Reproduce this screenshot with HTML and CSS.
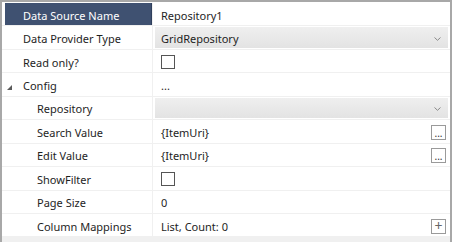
FILE: index.html
```html
<!DOCTYPE html>
<html lang="en">

<head>
    <meta charset="UTF-8">
    <title>Property Grid</title>
    <link rel="stylesheet" href="styles.css">
</head>

<body>
    <div class="grid">
        <div class="row selected">
            <div class="name">Data Source Name</div>
            <div class="value">Repository1</div>
        </div>
        <div class="row">
            <div class="name">Data Provider Type</div>
            <div class="value">
                <div class="combo">
                    <span>GridRepository</span>
                    <svg class="chevron" width="7" height="4" viewBox="0 0 7 4"><path d="M0.5 0.5 L3.5 3.3 L6.5 0.5" fill="none" stroke="#8a8a8a" stroke-width="1"/></svg>
                </div>
            </div>
        </div>
        <div class="row">
            <div class="name">Read only?</div>
            <div class="value"><span class="check"></span></div>
        </div>
        <div class="row">
            <div class="name">
                <svg class="expander" width="5" height="5" viewBox="0 0 5 5"><path d="M5 0 L5 5 L0 5 Z" fill="#5a5a5a"/></svg>
                Config
            </div>
            <div class="value">...</div>
        </div>
        <div class="row">
            <div class="name child">Repository</div>
            <div class="value">
                <div class="combo">
                    <span></span>
                    <svg class="chevron" width="7" height="4" viewBox="0 0 7 4"><path d="M0.5 0.5 L3.5 3.3 L6.5 0.5" fill="none" stroke="#8a8a8a" stroke-width="1"/></svg>
                </div>
            </div>
        </div>
        <div class="row">
            <div class="name child">Search Value</div>
            <div class="value with-btn"><span>{ItemUri}</span><span class="btn">...</span></div>
        </div>
        <div class="row">
            <div class="name child">Edit Value</div>
            <div class="value with-btn"><span>{ItemUri}</span><span class="btn">...</span></div>
        </div>
        <div class="row">
            <div class="name child">ShowFilter</div>
            <div class="value"><span class="check"></span></div>
        </div>
        <div class="row">
            <div class="name child">Page Size</div>
            <div class="value">0</div>
        </div>
        <div class="row">
            <div class="name child">Column Mappings</div>
            <div class="value with-btn"><span>List, Count: 0</span><span class="btn plus">+</span></div>
        </div>
        <div class="footer"></div>
    </div>
</body>

</html>
```

FILE: styles.css
```css
body {
    margin: 0;
    font-family: "Noto Sans", sans-serif;
    font-size: 11px;
    color: #1e1e1e;
    background: #ffffff;
}

.grid {
    width: 448px;
    height: 240px;
    border: 2px solid #a8a8a8;
    border-bottom: none;
    padding-top: 1px;
    display: flex;
    flex-direction: column;
}

.row {
    display: grid;
    grid-template-columns: 150px 1fr;
    height: 22.45px;
    flex-shrink: 0;
    border-bottom: 1px solid #f0f0f0;
}

.name {
    display: flex;
    align-items: center;
    margin-left: 3px;
    padding-left: 18px;
    padding-top: 2px;
    position: relative;
}

.name.child {
    padding-left: 32px;
}

.selected .name {
    background-color: #3f5171;
    color: white;
    border-right: 1px solid #2f3f5c;
}

.expander {
    position: absolute;
    left: 2px;
    top: 12px;
}

.value {
    display: flex;
    align-items: center;
    padding-left: 8px;
    padding-top: 2px;
    border-left: 1px solid #f0f0f0;
}

.combo {
    flex: 1;
    align-self: stretch;
    margin: -1px 2px 1px -6px;
    padding-left: 6px;
    padding-top: 2px;
    padding-right: 7px;
    display: flex;
    align-items: center;
    justify-content: space-between;
    background: linear-gradient(#efefef, #e3e3e3);
}

.check {
    width: 12px;
    height: 12px;
    border: 1px solid #555555;
    background: white;
}

.with-btn {
    justify-content: space-between;
    padding-right: 4px;
}

.btn {
    width: 13px;
    height: 13px;
    border: 1px solid #9a9a9a;
    display: flex;
    align-items: flex-end;
    justify-content: center;
    font-size: 10px;
    line-height: 12px;
    color: #333333;
}

.btn.plus {
    align-items: center;
    font-size: 14px;
    color: #666666;
}

.footer {
    flex: 1;
    background-color: #f0f0f0;
}
```
